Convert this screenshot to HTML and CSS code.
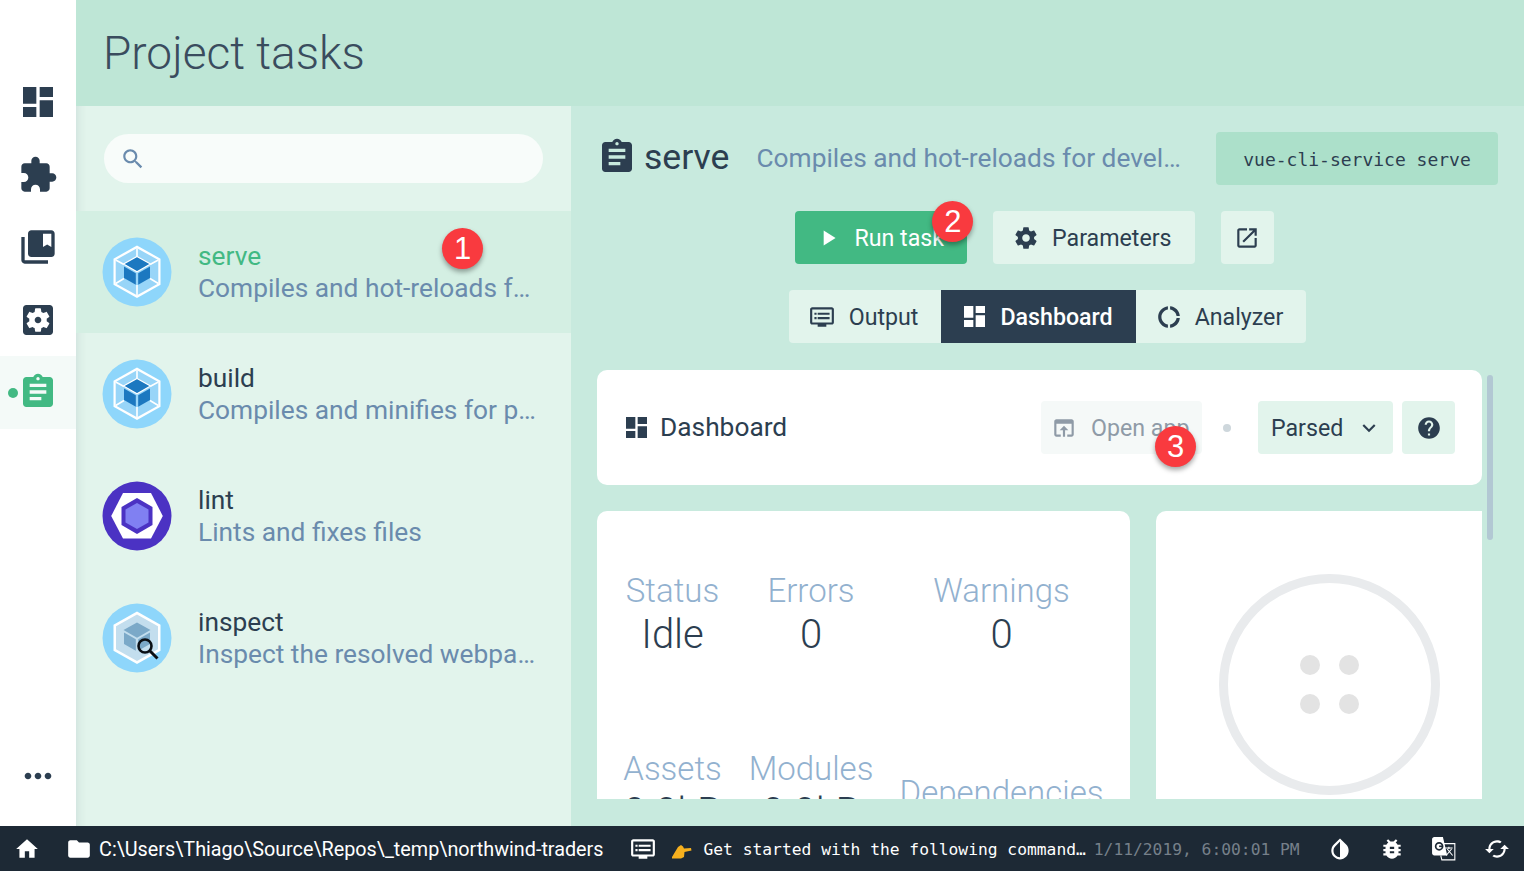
FILE: index.html
```html
<!DOCTYPE html>
<html lang="en">
<head>
    <meta charset="UTF-8">
    <title>Project tasks</title>
    <link rel="stylesheet" href="styles.css">
</head>
<body>
<svg class="defs" width="0" height="0">
    <defs>
        <symbol id="i-dashboard" viewBox="3 3 18 18"><path d="M3 13h8V3H3v10zm0 8h8v-6H3v6zm10 0h8V11h-8v10zm0-18v6h8V3h-8z"/></symbol>
        <symbol id="i-assignment" viewBox="0 0 24 24"><path d="M19 3h-4.18C14.4 1.84 13.3 1 12 1c-1.3 0-2.4.84-2.82 2H5c-1.1 0-2 .9-2 2v14c0 1.1.9 2 2 2h14c1.1 0 2-.9 2-2V5c0-1.1-.9-2-2-2zm-7 0c.55 0 1 .45 1 1s-.45 1-1 1-1-.45-1-1 .45-1 1-1zm2 14H7v-2h7v2zm3-4H7v-2h10v2zm0-4H7V7h10v2z"/></symbol>
        <symbol id="i-webpack" viewBox="0 0 70 70">
            <circle cx="35" cy="35" r="34.5" fill="#8ed6fb"/>
            <path d="M35 8.500 58.500 21.700V47.800L35 61 11.500 47.800V21.700Z" fill="#fff"/>
            <path d="M35 11.200 56.300 23V46.500L35 58.300 13.700 46.500V23Z" fill="#98d5f8"/>
            <path d="M35 11.200V20M56.300 23 48 27.500M56.300 46.500 48 41.500M35 58.300V48M13.700 46.500 22 41.500M13.700 23 22 27.500" stroke="#fff" stroke-width="1.600" fill="none"/>
            <path d="M35 19.500 48.500 27 35 34.800 21.500 27Z" fill="#1c78c0" stroke="#fff" stroke-width="1.200"/>
            <path d="M22 29.500 33.800 36.300V47.800L22 41Z" fill="#1c78c0"/>
            <path d="M48 29.500 36.200 36.300V47.800L48 41Z" fill="#1c78c0"/>
        </symbol>
    </defs>
</svg>
<div class="app">
    <div class="content">
        <nav class="sidebar">
            <div class="nav-items">
                <a class="nav-item"><svg class="nav-icon dash"><use href="#i-dashboard"/></svg></a>
                <a class="nav-item"><svg class="nav-icon" viewBox="0 0 24 24"><path d="M20.500 11H19V7c0-1.100-.9-2-2-2h-4V3.500C13 2.120 11.880 1 10.500 1S8 2.120 8 3.500V5H4c-1.100 0-1.990.9-1.990 2v3.800H3.500c1.490 0 2.700 1.210 2.700 2.700s-1.210 2.700-2.700 2.700H2V20c0 1.100.9 2 2 2h3.800v-1.500c0-1.490 1.210-2.700 2.700-2.700 1.490 0 2.700 1.210 2.700 2.700V22H17c1.100 0 2-.9 2-2v-4h1.500c1.380 0 2.500-1.120 2.500-2.500S21.880 11 20.500 11z"/></svg></a>
                <a class="nav-item"><svg class="nav-icon" viewBox="0 0 24 24"><path d="M4 6H2v14c0 1.100.9 2 2 2h14v-2H4V6z"/><path d="M20 2H8c-1.100 0-2 .9-2 2v12c0 1.100.9 2 2 2h12c1.100 0 2-.9 2-2V4c0-1.100-.9-2-2-2zm0 10l-2.500-1.500L15 12V4h5v8z"/></svg></a>
                <a class="nav-item"><svg class="nav-icon" viewBox="0 0 24 24"><path d="M12 10c-1.100 0-2 .9-2 2s.9 2 2 2 2-.9 2-2-.9-2-2-2zm7-7H5c-1.110 0-2 .9-2 2v14c0 1.100.89 2 2 2h14c1.110 0 2-.9 2-2V5c0-1.100-.89-2-2-2zm-1.750 9c0 .23-.02.46-.05.68l1.480 1.160c.13.11.17.3.08.45l-1.400 2.420c-.09.15-.27.21-.43.15l-1.740-.7c-.36.28-.76.51-1.180.69l-.26 1.850c-.03.17-.18.3-.35.3h-2.800c-.17 0-.32-.13-.35-.29l-.26-1.850c-.43-.18-.82-.41-1.180-.69l-1.740.7c-.16.06-.34 0-.43-.15l-1.400-2.420c-.09-.15-.05-.34.08-.45l1.480-1.160c-.03-.23-.05-.46-.05-.69 0-.23.02-.46.05-.68l-1.480-1.160c-.13-.11-.17-.3-.08-.45l1.400-2.420c.09-.15.27-.21.43-.15l1.740.7c.36-.28.76-.51 1.180-.69l.26-1.850c.03-.17.18-.3.35-.3h2.800c.17 0 .32.13.35.29l.26 1.850c.43.18.82.41 1.180.69l1.740-.7c.16-.06.34 0 .43.15l1.400 2.420c.09.15.05.34-.08.45l-1.480 1.160c.03.23.05.46.05.69z"/></svg></a>
                <a class="nav-item active"><span class="nav-dot"></span><svg class="nav-icon"><use href="#i-assignment"/></svg></a>
            </div>
            <a class="nav-more"><svg class="nav-icon" viewBox="0 0 24 24"><path d="M6 10c-1.100 0-2 .9-2 2s.9 2 2 2 2-.9 2-2-.9-2-2-2zm12 0c-1.100 0-2 .9-2 2s.9 2 2 2 2-.9 2-2-.9-2-2-2zm-6 0c-1.100 0-2 .9-2 2s.9 2 2 2 2-.9 2-2-.9-2-2-2z"/></svg></a>
        </nav>
        <main class="page">
            <header class="page-header"><h1>Project tasks</h1></header>
            <div class="page-body">
                <aside class="task-pane">
                    <div class="search-wrap">
                        <div class="search">
                            <svg class="search-icon" viewBox="0 0 24 24"><path d="M15.500 14h-.79l-.28-.27C15.410 12.590 16 11.110 16 9.500 16 5.910 13.090 3 9.500 3S3 5.910 3 9.500 5.910 16 9.500 16c1.610 0 3.090-.59 4.230-1.570l.27.28v.79l5 4.990L20.490 19l-4.990-5zm-6 0C7.010 14 5 11.990 5 9.500S7.010 5 9.500 5 14 7.010 14 9.500 11.990 14 9.500 14z"/></svg>
                        </div>
                    </div>
                    <div class="task selected">
                        <svg class="task-icon"><use href="#i-webpack"/></svg>
                        <div class="task-text"><div class="task-name">serve</div><div class="task-desc">Compiles and hot-reloads for development</div></div>
                        <span class="badge badge-1">1</span>
                    </div>
                    <div class="task">
                        <svg class="task-icon"><use href="#i-webpack"/></svg>
                        <div class="task-text"><div class="task-name">build</div><div class="task-desc">Compiles and minifies for production</div></div>
                    </div>
                    <div class="task">
                        <svg class="task-icon" viewBox="0 0 70 70">
                            <circle cx="35" cy="35" r="34.500" fill="#4b32c3"/>
                            <path d="M21 12H49L60.800 35 49 57.500H21L9.200 35Z" fill="#fff"/>
                            <path d="M35 17 50.500 26V44L35 53 19.500 44V26Z" fill="#4b32c3"/>
                            <path d="M35 22 46.500 28.500V41.500L35 48 23.500 41.500V28.500Z" fill="#8080f2"/>
                        </svg>
                        <div class="task-text"><div class="task-name">lint</div><div class="task-desc">Lints and fixes files</div></div>
                    </div>
                    <div class="task">
                        <svg class="task-icon" viewBox="0 0 70 70">
                            <circle cx="35" cy="35" r="34.500" fill="#8ed6fb"/>
                            <path d="M35 8.500 58.500 21.700V47.800L35 61 11.500 47.800V21.700Z" fill="#fff"/>
                            <path d="M35 11.500 56 23.300V46.200L35 58 14 46.200V23.300Z" fill="#c3deee"/>
                            <path d="M35 19.500 48.500 27 35 34.800 21.500 27Z" fill="#7ba9c8"/>
                            <path d="M22 29.500 33.800 36.300V47.800L22 41Z" fill="#7ba9c8"/>
                            <path d="M48 29.500 36.200 36.300V47.800L48 41Z" fill="#7ba9c8"/>
                            <circle cx="43" cy="43" r="6.500" fill="none" stroke="#0b0f14" stroke-width="2.600"/>
                            <path d="M48 48 55.500 55.500" stroke="#0b0f14" stroke-width="3"/>
                        </svg>
                        <div class="task-text"><div class="task-name">inspect</div><div class="task-desc">Inspect the resolved webpack config</div></div>
                    </div>
                </aside>
                <section class="detail">
                    <div class="detail-head">
                        <svg class="head-icon"><use href="#i-assignment"/></svg>
                        <span class="head-name">serve</span>
                        <span class="head-desc">Compiles and hot-reloads for development</span>
                        <code class="head-cmd">vue-cli-service serve</code>
                    </div>
                    <div class="actions">
                        <button class="btn btn-run">
                            <svg class="btn-icon" viewBox="0 0 24 24"><path d="M8 5v14l11-7z"/></svg>Run task
                            <span class="badge badge-2">2</span>
                        </button>
                        <button class="btn">
                            <svg class="btn-icon" viewBox="0 0 24 24"><path d="M19.430 12.980c.04-.32.07-.64.07-.98s-.03-.66-.07-.98l2.110-1.650c.19-.15.24-.42.12-.64l-2-3.460c-.12-.22-.39-.3-.61-.22l-2.490 1c-.52-.4-1.080-.73-1.690-.98l-.38-2.650C14.460 2.180 14.250 2 14 2h-4c-.25 0-.46.18-.49.42l-.38 2.650c-.61.25-1.170.59-1.690.98l-2.490-1c-.23-.09-.49 0-.61.22l-2 3.460c-.13.22-.07.49.12.64l2.110 1.650c-.04.32-.07.65-.07.98s.03.66.07.98l-2.110 1.650c-.19.15-.24.42-.12.64l2 3.460c.12.22.39.3.61.22l2.490-1c.52.4 1.080.73 1.690.98l.38 2.650c.03.24.24.42.49.42h4c.25 0 .46-.18.49-.42l.38-2.650c.61-.25 1.170-.59 1.690-.98l2.490 1c.23.09.49 0 .61-.22l2-3.460c.12-.22.07-.49-.12-.64l-2.110-1.650zM12 15.500c-1.930 0-3.500-1.570-3.500-3.500s1.570-3.500 3.500-3.500 3.500 1.570 3.500 3.500-1.570 3.500-3.500 3.500z"/></svg>Parameters
                        </button>
                        <button class="btn btn-square">
                            <svg class="btn-icon" viewBox="0 0 24 24"><path d="M19 19H5V5h7V3H5c-1.110 0-2 .9-2 2v14c0 1.100.89 2 2 2h14c1.100 0 2-.9 2-2v-7h-2v7zM14 3v2h3.590l-9.830 9.830 1.410 1.410L19 6.410V10h2V3h-7z"/></svg>
                        </button>
                    </div>
                    <div class="tabs">
                        <button class="tab tab-first">
                            <svg class="btn-icon" viewBox="0 0 24 24"><path d="M21 3H3c-1.100 0-2 .9-2 2v12c0 1.100.9 2 2 2h5v2h8v-2h5c1.100 0 1.990-.9 1.990-2L23 5c0-1.100-.9-2-2-2zm0 14H3V5h18v12zm-2-9H8v2h11V8zm0 4H8v2h11v-2zM7 8H5v2h2V8zm0 4H5v2h2v-2z"/></svg>Output
                        </button>
                        <button class="tab tab-active">
                            <svg class="btn-icon small"><use href="#i-dashboard"/></svg>Dashboard
                        </button>
                        <button class="tab tab-last">
                            <svg class="btn-icon" viewBox="0 0 24 24"><path d="M11 5.080V2c-5 .5-9 4.810-9 10s4 9.500 9 10v-3.080c-3-.48-6-3.400-6-6.920s3-6.440 6-6.920zM18.970 11H22c-.47-5-4-8.530-9-9v3.080C16 5.510 18.540 8 18.970 11zM13 18.920V22c5-.47 8.530-4 9-9h-3.030c-.43 3-2.970 5.490-5.970 5.920z"/></svg>Analyzer
                        </button>
                    </div>
                    <div class="dash-scroll">
                        <div class="dash-inner">
                            <div class="card dash-bar">
                                <svg class="bar-icon"><use href="#i-dashboard"/></svg>
                                <span class="bar-title">Dashboard</span>
                                <button class="btn btn-open">
                                    <svg class="btn-icon" viewBox="0 0 24 24"><path d="M19 4H5c-1.110 0-2 .9-2 2v12c0 1.100.89 2 2 2h4v-2H5V8h14v10h-4v2h4c1.100 0 2-.9 2-2V6c0-1.100-.89-2-2-2zm-7 6l-4 4h3v6h2v-6h3l-4-4z"/></svg>Open app
                                    <span class="badge badge-3">3</span>
                                </button>
                                <span class="bar-dot"></span>
                                <button class="btn btn-select">Parsed
                                    <svg class="btn-icon" viewBox="0 0 24 24"><path d="M16.590 8.590L12 13.170 7.410 8.590 6 10l6 6 6-6z"/></svg>
                                </button>
                                <button class="btn btn-help">
                                    <svg class="btn-icon" viewBox="0 0 24 24"><path d="M12 2C6.480 2 2 6.480 2 12s4.480 10 10 10 10-4.480 10-10S17.520 2 12 2zm1 17h-2v-2h2v2zm2.070-7.750l-.9.92C13.450 12.900 13 13.500 13 15h-2v-.5c0-1.100.45-2.100 1.170-2.830l1.240-1.260c.37-.36.59-.86.59-1.410 0-1.100-.9-2-2-2s-2 .9-2 2H8c0-2.210 1.790-4 4-4s4 1.790 4 4c0 .88-.36 1.680-.93 2.250z"/></svg>
                                </button>
                            </div>
                            <div class="cards">
                                <div class="card stats">
                                    <div class="stat-row">
                                        <div class="stat stat-a"><div class="stat-label">Status</div><div class="stat-value">Idle</div></div>
                                        <div class="stat stat-b"><div class="stat-label">Errors</div><div class="stat-value">0</div></div>
                                        <div class="stat stat-c"><div class="stat-label">Warnings</div><div class="stat-value">0</div></div>
                                    </div>
                                    <div class="stat-row second">
                                        <div class="stat stat-a"><div class="stat-label">Assets</div><div class="stat-value">0.0kB</div></div>
                                        <div class="stat stat-b"><div class="stat-label">Modules</div><div class="stat-value">0.0kB</div></div>
                                        <div class="stat stat-c low"><div class="stat-label">Dependencies</div><div class="stat-value">0.0kB</div></div>
                                    </div>
                                </div>
                                <div class="card chart">
                                    <div class="placeholder">
                                        <span></span><span></span><span></span><span></span>
                                    </div>
                                </div>
                            </div>
                        </div>
                        <div class="scroll-thumb"></div>
                    </div>
                </section>
            </div>
        </main>
    </div>
    <footer class="statusbar">
        <svg class="st-icon home" viewBox="0 0 24 24"><path d="M10 20v-6h4v6h5v-8h3L12 3 2 12h3v8z"/></svg>
        <svg class="st-icon folder" viewBox="0 0 24 24"><path d="M10 4H4c-1.100 0-1.990.9-1.990 2L2 18c0 1.100.9 2 2 2h16c1.100 0 2-.9 2-2V8c0-1.100-.9-2-2-2h-8l-2-2z"/></svg>
        <span class="st-path">C:\Users\Thiago\Source\Repos\_temp\northwind-traders</span>
        <svg class="st-icon log" viewBox="0 0 24 24"><path d="M21 3H3c-1.100 0-2 .9-2 2v12c0 1.100.9 2 2 2h5v2h8v-2h5c1.100 0 1.990-.9 1.990-2L23 5c0-1.100-.9-2-2-2zm0 14H3V5h18v12zm-2-9H8v2h11V8zm0 4H8v2h11v-2zM7 8H5v2h2V8zm0 4H5v2h2v-2z"/></svg>
        <svg class="st-hand" viewBox="0 0 20 15"><path d="M0 13 6 3 9 1 11 2.500 12 4.500 19 4 19.500 6.500 12.500 8 12 13 9 14.500H0Z" fill="#f6b01e"/></svg>
        <span class="st-log">Get started with the following command…</span>
        <span class="st-time">1/11/2019, 6:00:01 PM</span>
        <svg class="st-icon contrast" viewBox="0 0 24 24"><path d="M17.660 7.930L12 2.270 6.340 7.930c-3.120 3.120-3.120 8.190 0 11.310C7.900 20.800 9.950 21.580 12 21.580c2.050 0 4.100-.78 5.660-2.340 3.120-3.120 3.120-8.190 0-11.310zM12 19.590c-1.600 0-3.110-.62-4.240-1.760C6.620 16.690 6 15.190 6 13.590s.62-3.110 1.760-4.240L12 5.100v14.490z"/></svg>
        <svg class="st-icon bug" viewBox="0 0 24 24"><path d="M20 8h-2.810c-.45-.78-1.070-1.450-1.820-1.960L17 4.410 15.590 3l-2.170 2.170C12.960 5.060 12.490 5 12 5c-.49 0-.96.06-1.410.17L8.410 3 7 4.410l1.620 1.630C7.880 6.550 7.260 7.220 6.810 8H4v2h2.090c-.05.33-.09.66-.09 1v1H4v2h2v1c0 .34.04.67.09 1H4v2h2.810c1.040 1.790 2.970 3 5.190 3s4.150-1.210 5.190-3H20v-2h-2.090c.05-.33.09-.66.09-1v-1h2v-2h-2v-1c0-.34-.04-.67-.09-1H20V8zm-6 8h-4v-2h4v2zm0-4h-4v-2h4v2z"/></svg>
        <svg class="st-icon lang" viewBox="0 0 24 24">
            <path d="M12 7H22V22H10L9 18" fill="none" stroke="#fff" stroke-width="1"/>
            <path d="M3 1H11L15 18H3C2 18 1 17 1 16V3C1 2 2 1 3 1Z" fill="#fff"/>
            <circle cx="7.500" cy="9.500" r="3.200" fill="none" stroke="#1d2935" stroke-width="1.600"/>
            <path d="M7.500 9.500H11" stroke="#1d2935" stroke-width="1.500"/>
            <path d="M13 11H20M16.500 10V12M19 12 14 18M15 12 20 18" fill="none" stroke="#fff" stroke-width="1"/>
        </svg>
        <svg class="st-icon sync" viewBox="0 0 24 24"><path d="M19 8l-4 4h3c0 3.310-2.690 6-6 6-1.010 0-1.970-.25-2.800-.7l-1.460 1.460C8.970 19.540 10.430 20 12 20c4.420 0 8-3.580 8-8h3l-4-4zM6 12c0-3.310 2.690-6 6-6 1.010 0 1.970.25 2.800.7l1.460-1.460C15.030 4.460 13.570 4 12 4c-4.420 0-8 3.580-8 8H1l4 4 4-4H6z"/></svg>
    </footer>
</div>
</body>
</html>
```

FILE: styles.css
```css
* {
    box-sizing: border-box;
}

html, body {
    height: 100%;
    margin: 0;
    overflow: hidden;
}

body {
    font-family: Roboto, "Liberation Sans", sans-serif;
    color: #2c3e50;
}

.defs {
    position: absolute;
}

svg {
    fill: currentColor;
    flex: none;
}

.app {
    display: flex;
    flex-direction: column;
    height: 871px;
}

.content {
    display: flex;
    height: 826px;
    flex: none;
}

/* sidebar */
.sidebar {
    width: 76px;
    flex: none;
    background: #fff;
    display: flex;
    flex-direction: column;
    justify-content: space-between;
    padding: 66px 0 30px;
}

.nav-item {
    position: relative;
    height: 72.5px;
    display: flex;
    align-items: center;
    justify-content: center;
}

.nav-item.active {
    color: #42b983;
    background: #f4faf8;
}

.nav-dot {
    position: absolute;
    left: 8px;
    top: 32px;
    width: 10px;
    height: 10px;
    border-radius: 50%;
    background: #42b983;
}

.nav-icon {
    width: 40px;
    height: 40px;
}

.nav-icon.dash {
    width: 30px;
    height: 30px;
}

.nav-more {
    display: flex;
    justify-content: center;
}

/* page */
.page {
    flex: 1;
    display: flex;
    flex-direction: column;
    min-width: 0;
}

.page-header {
    height: 106px;
    flex: none;
    background: #bee6d6;
    padding: 0 0 0 27px;
    display: flex;
    align-items: center;
}

.page-header h1 {
    margin: 0;
    font-size: 46px;
    font-weight: 300;
    color: #3a4c5e;
}

.page-body {
    flex: 1;
    display: flex;
    min-height: 0;
}

/* left pane */
.task-pane {
    width: 495px;
    flex: none;
    background: #e2f4ec;
    box-shadow: inset 12px 0 10px -10px rgba(44, 62, 80, 0.1);
}

.search-wrap {
    height: 105px;
    padding: 28px 28px 0;
}

.search {
    height: 49px;
    border-radius: 25px;
    background: #f8fcfa;
    display: flex;
    align-items: center;
    padding-left: 16px;
}

.search-icon {
    width: 26px;
    height: 26px;
    color: #6a8bad;
}

.task {
    position: relative;
    height: 122px;
    display: flex;
    align-items: center;
    padding: 0 31px 0 26px;
    gap: 26px;
}

.task.selected {
    background: #d4efe3;
}

.task.selected .task-name {
    color: #42b983;
}

.task-icon {
    width: 70px;
    height: 70px;
}

.task-text {
    min-width: 0;
    flex: 1;
    font-size: 26.3px;
    line-height: 32px;
}

.task-desc {
    color: #6a8bad;
    white-space: nowrap;
    overflow: hidden;
    text-overflow: ellipsis;
}

/* right side */
.detail {
    flex: 1;
    min-width: 0;
    background: #c8eade;
    display: flex;
    flex-direction: column;
    padding: 26px 26px 27px;
}

.detail-head {
    display: flex;
    align-items: center;
    height: 53px;
    flex: none;
}

.head-icon {
    width: 40px;
    height: 40px;
    margin-bottom: 3px;
}

.head-name {
    font-size: 35.6px;
    margin: 0 0 3px 7px;
}

.head-desc {
    flex: 1;
    min-width: 0;
    margin: 0 34px 2px 27px;
    font-size: 26.3px;
    color: #6a8bad;
    white-space: nowrap;
    overflow: hidden;
    text-overflow: ellipsis;
}

.head-cmd {
    flex: none;
    width: 282px;
    height: 53px;
    padding-top: 2px;
    border-radius: 4px;
    background: #ace0ca;
    font-family: "DejaVu Sans Mono", monospace;
    font-size: 18px;
    display: flex;
    align-items: center;
    justify-content: center;
}

.btn, .tab {
    font-family: inherit;
    border: 0;
    height: 53px;
    font-size: 23.2px;
    color: #2c3e50;
    background: #e2f4ec;
    display: flex;
    align-items: center;
    padding: 0 23px 0 20px;
    gap: 13px;
}

.btn {
    position: relative;
    border-radius: 4px;
}

.btn-icon {
    width: 26px;
    height: 26px;
}

.btn-icon.small {
    width: 21px;
    height: 21px;
}

.actions {
    display: flex;
    justify-content: center;
    gap: 26px;
    margin-top: 26px;
    padding-right: 26px;
    flex: none;
}

.btn-run {
    background: #42b983;
    color: #fff;
    padding: 0 23px 0 20px;
}

.btn-square {
    width: 53px;
    padding: 0;
    justify-content: center;
}

.tabs {
    display: flex;
    justify-content: center;
    margin-top: 26px;
    flex: none;
}

.tab-first {
    border-radius: 4px 0 0 4px;
    padding-right: 23px;
    gap: 14px;
}

.tab-last {
    border-radius: 0 4px 4px 0;
}

.tab-active {
    background: #2c3e50;
    color: #fff;
    font-weight: 500;
    padding: 0 23px;
    gap: 15px;
}

/* scroll area */
.dash-scroll {
    position: relative;
    flex: 1;
    min-height: 0;
    margin-top: 27px;
    overflow: hidden;
}

.dash-inner {
    width: 885px;
}

.scroll-thumb {
    position: absolute;
    left: 890px;
    top: 5px;
    width: 6px;
    height: 165px;
    border-radius: 3px;
    background: #b2c8d3;
}

.card {
    background: #fff;
    border-radius: 10px;
}

.dash-bar {
    height: 115px;
    display: flex;
    align-items: center;
    padding: 0 27px 0 29px;
}

.bar-icon {
    width: 21px;
    height: 21px;
}

.bar-title {
    font-size: 26.3px;
    margin: 0 0 2px 13px;
    flex: 1;
}

.btn-open {
    width: 161px;
    padding: 0 0 0 10px;
    background: #f5f9f8;
    color: #8f9ba7;
    gap: 14px;
}

.bar-dot {
    width: 8px;
    height: 8px;
    border-radius: 50%;
    background: #ced7dc;
    margin: 0 27px 0 21px;
}

.btn-select {
    width: 135px;
    padding: 0 11px 0 13px;
    justify-content: space-between;
    margin-right: 9px;
}

.btn-help {
    width: 53px;
    padding: 0;
    justify-content: center;
}

.cards {
    display: flex;
    gap: 26px;
    margin-top: 26px;
}

.stats {
    width: 533px;
    flex: none;
    height: 500px;
    padding: 60px 0 0 23px;
}

.chart {
    flex: 1;
    height: 500px;
    display: flex;
    justify-content: center;
    padding: 63px 0 0 20px;
    border-radius: 10px 0 0 0;
}

.placeholder {
    width: 221px;
    height: 221px;
    border: 9px solid #e9ebed;
    border-radius: 50%;
    display: grid;
    grid-template-columns: 20px 20px;
    grid-template-rows: 20px 20px;
    gap: 19px;
    justify-content: center;
    align-content: center;
}

.placeholder span {
    background: #e3e3e3;
    border-radius: 50%;
}

.stat-row {
    display: flex;
    align-items: flex-start;
}

.stat-row.second {
    margin-top: 90px;
}

.stat {
    text-align: center;
    font-weight: 300;
}

.stat-a {
    width: 105px;
}

.stat-b {
    width: 172px;
}

.stat-c {
    width: 209px;
}

.stat-c.low {
    padding-top: 24px;
}

.stat-label {
    font-size: 33px;
    line-height: 40px;
    color: #92b1cf;
    white-space: nowrap;
}

.stat-value {
    font-size: 40px;
    line-height: 48px;
}

/* numbered callouts added over the screenshot */
.badge {
    position: absolute;
    width: 41px;
    height: 41px;
    border-radius: 50%;
    background: #f93a3f;
    color: #fff;
    font-family: "Liberation Sans", Arial, sans-serif;
    font-size: 31px;
    font-weight: 400;
    display: flex;
    align-items: center;
    justify-content: center;
    box-shadow: 0 3px 5px rgba(0, 0, 0, 0.35);
}

.badge-1 {
    left: 366px;
    top: 17px;
}

.badge-2 {
    left: 137px;
    top: -10px;
}

.badge-3 {
    left: 114px;
    top: 25px;
}

/* status bar */
.statusbar {
    height: 45px;
    flex: none;
    background: #1d2935;
    color: #fff;
    display: flex;
    align-items: center;
    font-size: 19.8px;
}

.st-icon {
    width: 26px;
    height: 26px;
}

.st-icon.home {
    margin-left: 14px;
}

.st-icon.folder {
    margin-left: 26px;
}

.st-path {
    margin-left: 7px;
    padding-top: 2px;
    white-space: nowrap;
}

.st-icon.log {
    margin-left: 26px;
}

.st-hand {
    width: 20px;
    height: 15px;
    margin: 5px 0 0 16px;
}

.st-log, .st-time {
    font-family: "DejaVu Sans Mono", monospace;
    font-size: 16.3px;
    white-space: nowrap;
    padding-top: 1px;
}

.st-log {
    margin-left: 12px;
}

.st-time {
    margin-left: 8px;
    color: #76808a;
}

.st-icon.contrast {
    margin-left: 27px;
}

.st-icon.bug {
    margin-left: 26px;
}

.st-icon.lang {
    margin-left: 26px;
}

.st-icon.sync {
    margin-left: 27px;
}
```
